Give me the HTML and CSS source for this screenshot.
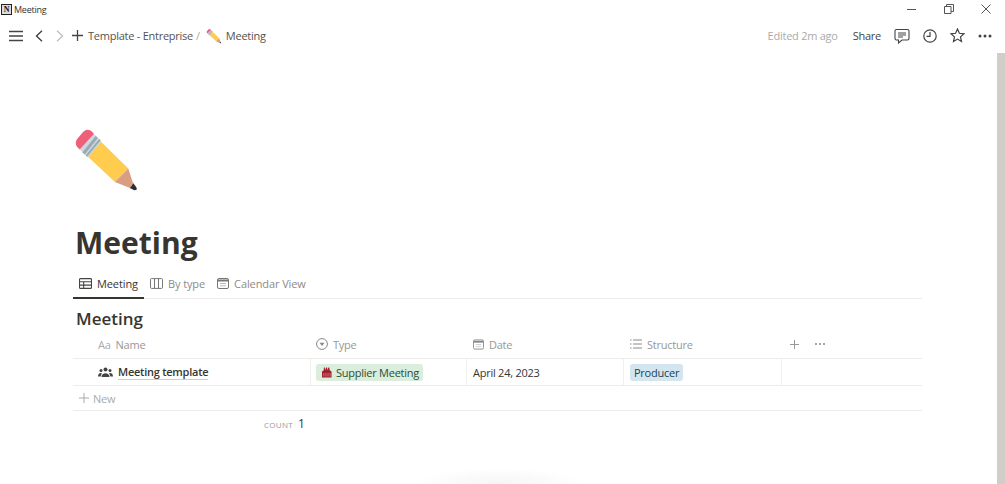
FILE: index.html
```html
<!DOCTYPE html>
<html lang="en">
<head>
  <meta charset="UTF-8">
  <title>Meeting</title>
  <link rel="stylesheet" href="styles.css">
</head>
<body>

  <svg class="defs" width="0" height="0">
    <symbol id="pencil" viewBox="40 20 200 200">
      <path d="M85 112 L123 66 L205 147 L165 187 Z" fill="#ffcc4d"/>
      <path d="M165 187 L205 147 L220 193 L232 212 L212 206 Z" fill="#d99e82"/>
      <path d="M210 205 Q216 200 220 191 L229 203 Q233 212 223 212 Z" fill="#292f33"/>
      <path d="M60 90 L100 42 L125 65 L85 114 Z" fill="#ccd6dd"/>
      <path d="M68 99 L108 50 L114 56 L75 105 Z" fill="#99aab5"/>
      <path d="M78 108 L118 59 L122 63 L82 112 Z" fill="#99aab5"/>
      <path d="M60 90 L52 82 Q44 70 53 58 L70 38 Q84 24 98 38 L102 44 Z" fill="#ef5f79"/>
    </symbol>
  </svg>

  <div class="titlebar">
    <div class="app-logo">N</div>
    <div class="app-name">Meeting</div>
    <div class="win-buttons">
      <svg width="10" height="10" viewBox="0 0 10 10"><path d="M0 5.500H9" stroke="#555" fill="none"/></svg>
      <svg width="10" height="10" viewBox="0 0 10 10"><path d="M.5 2.500h6.500v7H.5zM2.500 2.500v-2h7v7H7" stroke="#555" fill="none"/></svg>
      <svg width="10" height="10" viewBox="0 0 10 10"><path d="M.5.5l9 9M9.500.5l-9 9" stroke="#555" fill="none"/></svg>
    </div>
  </div>

  <div class="topbar">
    <svg class="nav-menu" width="14" height="12" viewBox="0 0 14 12"><path d="M0 1.500H14M0 6H14M0 10.500H14" stroke="#444" stroke-width="1.400" fill="none"/></svg>
    <svg class="nav-back" width="9" height="12" viewBox="0 0 9 12"><path d="M7 .8L1.500 6L7 11.200" stroke="#444" stroke-width="1.400" fill="none"/></svg>
    <svg class="nav-next" width="9" height="12" viewBox="0 0 9 12"><path d="M2 .8L7.500 6L2 11.200" stroke="#bbb" stroke-width="1.200" fill="none"/></svg>
    <svg class="nav-add" width="11" height="11" viewBox="0 0 11 11"><path d="M5.500 0V11M0 5.500H11" stroke="#444" stroke-width="1.300" fill="none"/></svg>
    <span class="crumb">Template - Entreprise</span>
    <span class="crumb-sep">/</span>
    <svg class="crumb-icon" width="16" height="16"><use href="#pencil"/></svg>
    <span class="crumb crumb-page">Meeting</span>

    <div class="top-actions">
      <span class="edited">Edited 2m ago</span>
      <span class="share">Share</span>
      <svg class="action" width="16" height="16" viewBox="0 0 16 16"><path d="M2.500 1.500h11a1.500 1.500 0 0 1 1.500 1.500v7.500a1.500 1.500 0 0 1-1.500 1.500H8l-3.500 3v-3h-2A1.500 1.500 0 0 1 1 10.500V3a1.500 1.500 0 0 1 1.500-1.500zM4 5h8M4 7h8M4 9h5" stroke="#444" stroke-width="1.100" fill="none"/></svg>
      <svg class="action" width="14" height="14" viewBox="0 0 14 14"><circle cx="7" cy="7" r="6.200" stroke="#444" stroke-width="1.200" fill="none"/><path d="M7 3v4.300H3.500" stroke="#444" stroke-width="1.200" fill="none"/></svg>
      <svg class="action" width="15" height="15" viewBox="0 0 15 15"><path d="M7.500 1l1.900 4.300 4.600.5-3.500 3.100 1 4.600-4-2.400-4 2.400 1-4.600L1 5.800l4.600-.5z" stroke="#444" stroke-width="1.200" fill="none"/></svg>
      <svg class="action" width="14" height="4" viewBox="0 0 14 4"><circle cx="2" cy="2" r="1.500" fill="#444"/><circle cx="7" cy="2" r="1.500" fill="#444"/><circle cx="12" cy="2" r="1.500" fill="#444"/></svg>
    </div>
  </div>

  <div class="main">
    <div class="page">
      <svg class="page-icon" width="67" height="67"><use href="#pencil"/></svg>
      <h1>Meeting</h1>

      <div class="tabs">
        <div class="tab active">
          <svg width="13" height="11" viewBox="0 0 13 11"><path d="M1.500.6h10a1 1 0 0 1 1 1v7.800a1 1 0 0 1-1 1h-10a1 1 0 0 1-1-1V1.600a1 1 0 0 1 1-1zM.5 3.800h12M.5 7.100h12M4.700 3.800v6.600" stroke="#444" stroke-width="1.100" fill="none"/></svg>
          Meeting
        </div>
        <div class="tab">
          <svg width="13" height="11" viewBox="0 0 13 11"><path d="M1.500.6h10a1 1 0 0 1 1 1v7.800a1 1 0 0 1-1 1h-10a1 1 0 0 1-1-1V1.600a1 1 0 0 1 1-1zM4.500.6v9.800M8.500.6v9.800" stroke="#777" stroke-width="1" fill="none"/></svg>
          By type
        </div>
        <div class="tab">
          <svg width="12" height="11" viewBox="0 0 12 11"><rect x=".5" y=".5" width="11" height="10" rx="1.500" stroke="#777" fill="none"/><path d="M.5 1.500h11v2h-11z" fill="#777"/><path d="M3 5.500h6M3 7.800h6" stroke="#bbb"/></svg>
          Calendar View
        </div>
      </div>

      <h2>Meeting</h2>

      <div class="table">
        <div class="row head">
          <div class="cell c-name"><span class="aa">Aa</span>Name</div>
          <div class="cell c-type">
            <svg width="12" height="12" viewBox="0 0 12 12"><circle cx="6" cy="6" r="5.400" stroke="#888" fill="none"/><path d="M3.500 4.700h5L6 8z" fill="#888"/></svg>
            Type
          </div>
          <div class="cell c-date">
            <svg width="11" height="11" viewBox="0 0 12 11"><rect x=".5" y=".5" width="11" height="10" rx="1.500" stroke="#888" fill="none"/><path d="M.5 1.500h11v2h-11z" fill="#888"/><path d="M3 5.500h6M3 7.800h6" stroke="#ccc"/></svg>
            Date
          </div>
          <div class="cell c-struct">
            <svg width="12" height="10" viewBox="0 0 12 10"><path d="M3 1h9M3 5h9M3 9h9" stroke="#888" fill="none"/><path d="M0 1h1.500M0 5h1.500M0 9h1.500" stroke="#888" fill="none"/></svg>
            Structure
          </div>
          <div class="cell c-rest">
            <svg width="9" height="9" viewBox="0 0 9 9"><path d="M4.500 0V9M0 4.500H9" stroke="#999" fill="none"/></svg>
            <svg class="more" width="10" height="2" viewBox="0 0 10 2"><circle cx="1" cy="1" r="1" fill="#888"/><circle cx="5" cy="1" r="1" fill="#888"/><circle cx="9" cy="1" r="1" fill="#888"/></svg>
          </div>
        </div>

        <div class="row item">
          <div class="cell c-name">
            <svg class="people" width="15" height="10" viewBox="0 0 15 10"><circle cx="7.500" cy="2.500" r="2" fill="#444"/><circle cx="3" cy="3.500" r="1.500" fill="#444"/><circle cx="12" cy="3.500" r="1.500" fill="#444"/><path d="M3.500 10c0-5 8-5 8 0zM0 9.500c0-3.500 2.500-4 3.800-3.300L2.600 9.500zM15 9.500c0-3.500-2.500-4-3.800-3.300l1.200 3.300z" fill="#444"/></svg>
            <span class="item-title">Meeting template</span>
          </div>
          <div class="cell c-type">
            <span class="tag green">
              <svg width="10" height="12" viewBox="0 0 11 12"><path d="M0 5.500l2-1.500 0-3h1l.5 3 1-3h1l.5 3 1-3h1l.5 3 2 1.500V12H0z" fill="#a0202e"/><path d="M2 7v4M4.300 7v4M6.600 7v4M8.900 7v4" stroke="#e8a0a8" stroke-width=".7"/></svg>
              Supplier Meeting
            </span>
          </div>
          <div class="cell c-date">April 24, 2023</div>
          <div class="cell c-struct"><span class="tag blue">Producer</span></div>
          <div class="cell c-rest"></div>
        </div>

        <div class="row add">
          <svg width="10" height="10" viewBox="0 0 10 10"><path d="M5 0V10M0 5H10" stroke="#aaa" fill="none"/></svg>
          New
        </div>

        <div class="count">
          <span class="count-label">COUNT</span>
          <span class="count-value">1</span>
        </div>
      </div>
    </div>
    <div class="scrollbar"></div>
  </div>

  <div class="bottom-shadow"></div>

</body>
</html>
```

FILE: styles.css
```css
html, body {
  height: 100%;
}

body {
  margin: 0;
  overflow: hidden;
  background: #fff;
  color: #37352f;
  font-family: "Open Sans", "Noto Sans", sans-serif;
  font-size: 11px;
  letter-spacing: -.25px;
  display: flex;
  flex-direction: column;
}

.defs {
  position: absolute;
}

.titlebar {
  height: 18px;
  display: flex;
  align-items: center;
  font-size: 9px;
  color: #333;
}

.app-logo {
  width: 9px;
  height: 9px;
  margin-left: 1px;
  border: 1px solid #222;
  background: #ddd;
  font: bold 8px/9px "Liberation Serif", serif;
  text-align: center;
  color: #111;
}

.app-name {
  margin-left: 2px;
}

.win-buttons {
  margin-left: auto;
  display: flex;
  gap: 27px;
  padding-right: 14px;
}

.topbar {
  height: 35px;
  display: flex;
  align-items: center;
  padding-left: 9px;
  color: #55534e;
}

.nav-back {
  margin-left: 12px;
}

.nav-next {
  margin-left: 11px;
}

.nav-add {
  margin-left: 8px;
}

.crumb {
  margin-left: 5px;
}

.crumb-sep {
  margin-left: 3px;
  color: #aaa;
}

.crumb-icon {
  margin-left: 6px;
}

.crumb-page {
  margin-left: 4px;
}

.top-actions {
  margin-left: auto;
  display: flex;
  align-items: center;
  padding-right: 13px;
}

.edited {
  color: #aaa;
}

.share {
  margin-left: 15px;
  color: #444;
}

.action {
  margin-left: 13px;
}

.main {
  flex: 1;
  display: flex;
  min-height: 0;
}

.page {
  flex: 1;
  padding: 73px 75px 0 73px;
}

.scrollbar {
  width: 8px;
  background: #cfcec9;
}

.page-icon {
  display: block;
}

h1 {
  margin: 29px 0 0 2px;
  font-size: 30px;
  line-height: 42px;
  font-weight: 700;
  letter-spacing: 0;
  color: #37352f;
}

.tabs {
  display: flex;
  margin-top: 5px;
  height: 29px;
  border-bottom: 1px solid #ececeb;
}

.tab {
  display: flex;
  align-items: center;
  gap: 5px;
  padding: 0 6px;
  letter-spacing: -.1px;
  color: #8d8b87;
}

.tab.active {
  color: #37352f;
  border-bottom: 2px solid #37352f;
  margin-bottom: -1px;
}

h2 {
  margin: 8px 0 0 3px;
  font-size: 17px;
  line-height: 24px;
  font-weight: 600;
  letter-spacing: 0;
}

.row {
  display: flex;
  border-bottom: 1px solid #ececeb;
}

.cell {
  display: flex;
  align-items: center;
  gap: 5px;
  box-sizing: border-box;
  padding-left: 7px;
}

.c-name {
  width: 237px;
  padding-left: 25px;
}

.c-type {
  width: 156px;
}

.c-date {
  width: 157px;
}

.c-struct {
  width: 158px;
}

.c-rest {
  flex: 1;
}

.head {
  height: 26px;
  padding-bottom: 1px;
  color: #999793;
}

.head .c-type {
  padding-left: 6px;
}

.aa {
  color: #aaa;
}

.head .c-rest {
  padding-left: 9px;
}

.more {
  margin-left: 11px;
}

.item {
  height: 26px;
  color: #37352f;
}

.item .cell + .cell {
  border-left: 1px solid #f0f0ef;
  padding-left: 6px;
}

.item .c-type.cell {
  padding-left: 5px;
}

.people {
  flex-shrink: 0;
}

.item-title {
  font-weight: 600;
  border-bottom: 1px solid #cfcec9;
  line-height: 14px;
}

.tag {
  display: inline-flex;
  align-items: center;
  gap: 4px;
  height: 17px;
  padding: 0 4px;
  border-radius: 3px;
}

.green {
  padding-left: 6px;
  background: #dbeddb;
  color: #2c4d39;
}

.blue {
  background: #d3e5ef;
  color: #1e3f56;
}

.add {
  height: 24px;
  align-items: center;
  gap: 4px;
  padding-left: 6px;
  color: #aaa;
}

.count {
  display: flex;
  align-items: baseline;
  gap: 5px;
  padding: 4px 0 0 191px;
}

.count-label {
  font-size: 8px;
  letter-spacing: .3px;
  color: #999;
}

.count-value {
  font-size: 12px;
  color: #37352f;
}

.bottom-shadow {
  position: absolute;
  left: 410px;
  bottom: 0;
  width: 180px;
  height: 16px;
  background: radial-gradient(ellipse at 50% 100%, #f5f5f5, #fff 70%);
}
```
